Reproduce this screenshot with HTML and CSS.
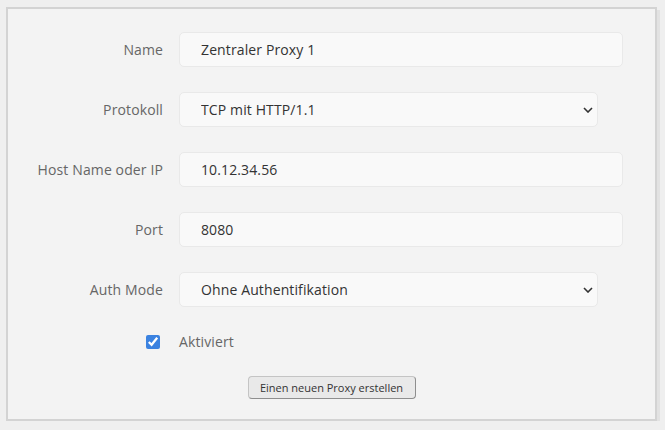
FILE: index.html
```html
<!DOCTYPE html>
<html lang="de">
<head>
<meta charset="utf-8">
<title>Proxy</title>
<link rel="stylesheet" href="styles.css">
</head>
<body>
<form class="panel">
  <div class="grid">
    <label class="label" for="name">Name</label>
    <input class="field" id="name" type="text" value="Zentraler Proxy 1">

    <label class="label" for="proto">Protokoll</label>
    <div class="select-wrap">
      <select class="field select" id="proto"><option>TCP mit HTTP/1.1</option></select>
      <svg class="chev" width="10" height="6" viewBox="0 0 10 6"><path d="M1 1l4 4 4-4" fill="none" stroke="#333" stroke-width="1.6"/></svg>
    </div>

    <label class="label" for="host">Host Name oder IP</label>
    <input class="field" id="host" type="text" value="10.12.34.56">

    <label class="label" for="port">Port</label>
    <input class="field" id="port" type="text" value="8080">

    <label class="label" for="auth">Auth Mode</label>
    <div class="select-wrap">
      <select class="field select" id="auth"><option>Ohne Authentifikation</option></select>
      <svg class="chev" width="10" height="6" viewBox="0 0 10 6"><path d="M1 1l4 4 4-4" fill="none" stroke="#333" stroke-width="1.6"/></svg>
    </div>

    <div class="check-cell"><input class="check" id="act" type="checkbox" checked></div>
    <label class="check-label" for="act">Aktiviert</label>
  </div>
  <div class="actions">
    <button class="btn" type="button">Einen neuen Proxy erstellen</button>
  </div>
</form>
</body>
</html>
```

FILE: styles.css
```css
html, body {
  margin: 0;
  padding: 0;
  background: #efefef;
  font-family: "Open Sans", "Noto Sans", sans-serif;
}

.panel {
  box-sizing: border-box;
  width: 651px;
  height: 414px;
  margin: 7px 0 0 6px;
  background: #f3f3f3;
  border: 2px solid #d3d3d3;
  box-shadow: 3px 3px 0 #e2e2e2;
  padding: 23px 32px 0 0;
}

.grid {
  display: grid;
  grid-template-columns: 155px 1fr;
  column-gap: 16px;
  row-gap: 25px;
  align-items: center;
}

.label {
  text-align: right;
  font-size: 14px;
  letter-spacing: 0.12px;
  color: #666;
}

.field {
  box-sizing: border-box;
  height: 35px;
  width: 100%;
  margin: 0;
  border: 1px solid #e9e9e9;
  border-radius: 5px;
  background: #f9f9f9;
  padding: 0 0 0 21px;
  font-family: inherit;
  font-size: 14px;
  letter-spacing: 0.12px;
  color: #333;
  outline: none;
}

.select-wrap {
  position: relative;
  width: 419px;
}

.select {
  appearance: none;
  -webkit-appearance: none;
}

.chev {
  position: absolute;
  right: 5px;
  top: 15px;
  pointer-events: none;
}

.check-cell {
  display: flex;
  justify-content: flex-end;
  height: 20px;
  align-items: center;
}

.check {
  width: 14px;
  height: 14px;
  margin: 0 3px 0 0;
  accent-color: #3b82e0;
}

.check-label {
  font-size: 14px;
  letter-spacing: 0.12px;
  color: #666;
  height: 20px;
  line-height: 20px;
}

.actions {
  display: flex;
  justify-content: center;
  margin: 24px 0 0 32px;
}

.btn {
  box-sizing: border-box;
  width: 168px;
  height: 23px;
  padding: 0;
  font-family: inherit;
  font-size: 11px;
  color: #333;
  background: #e9e9e9;
  border: 1px solid #c4c4c4;
  border-right-color: #8e8e8e;
  border-bottom-color: #8e8e8e;
  border-radius: 4px;
}
```
